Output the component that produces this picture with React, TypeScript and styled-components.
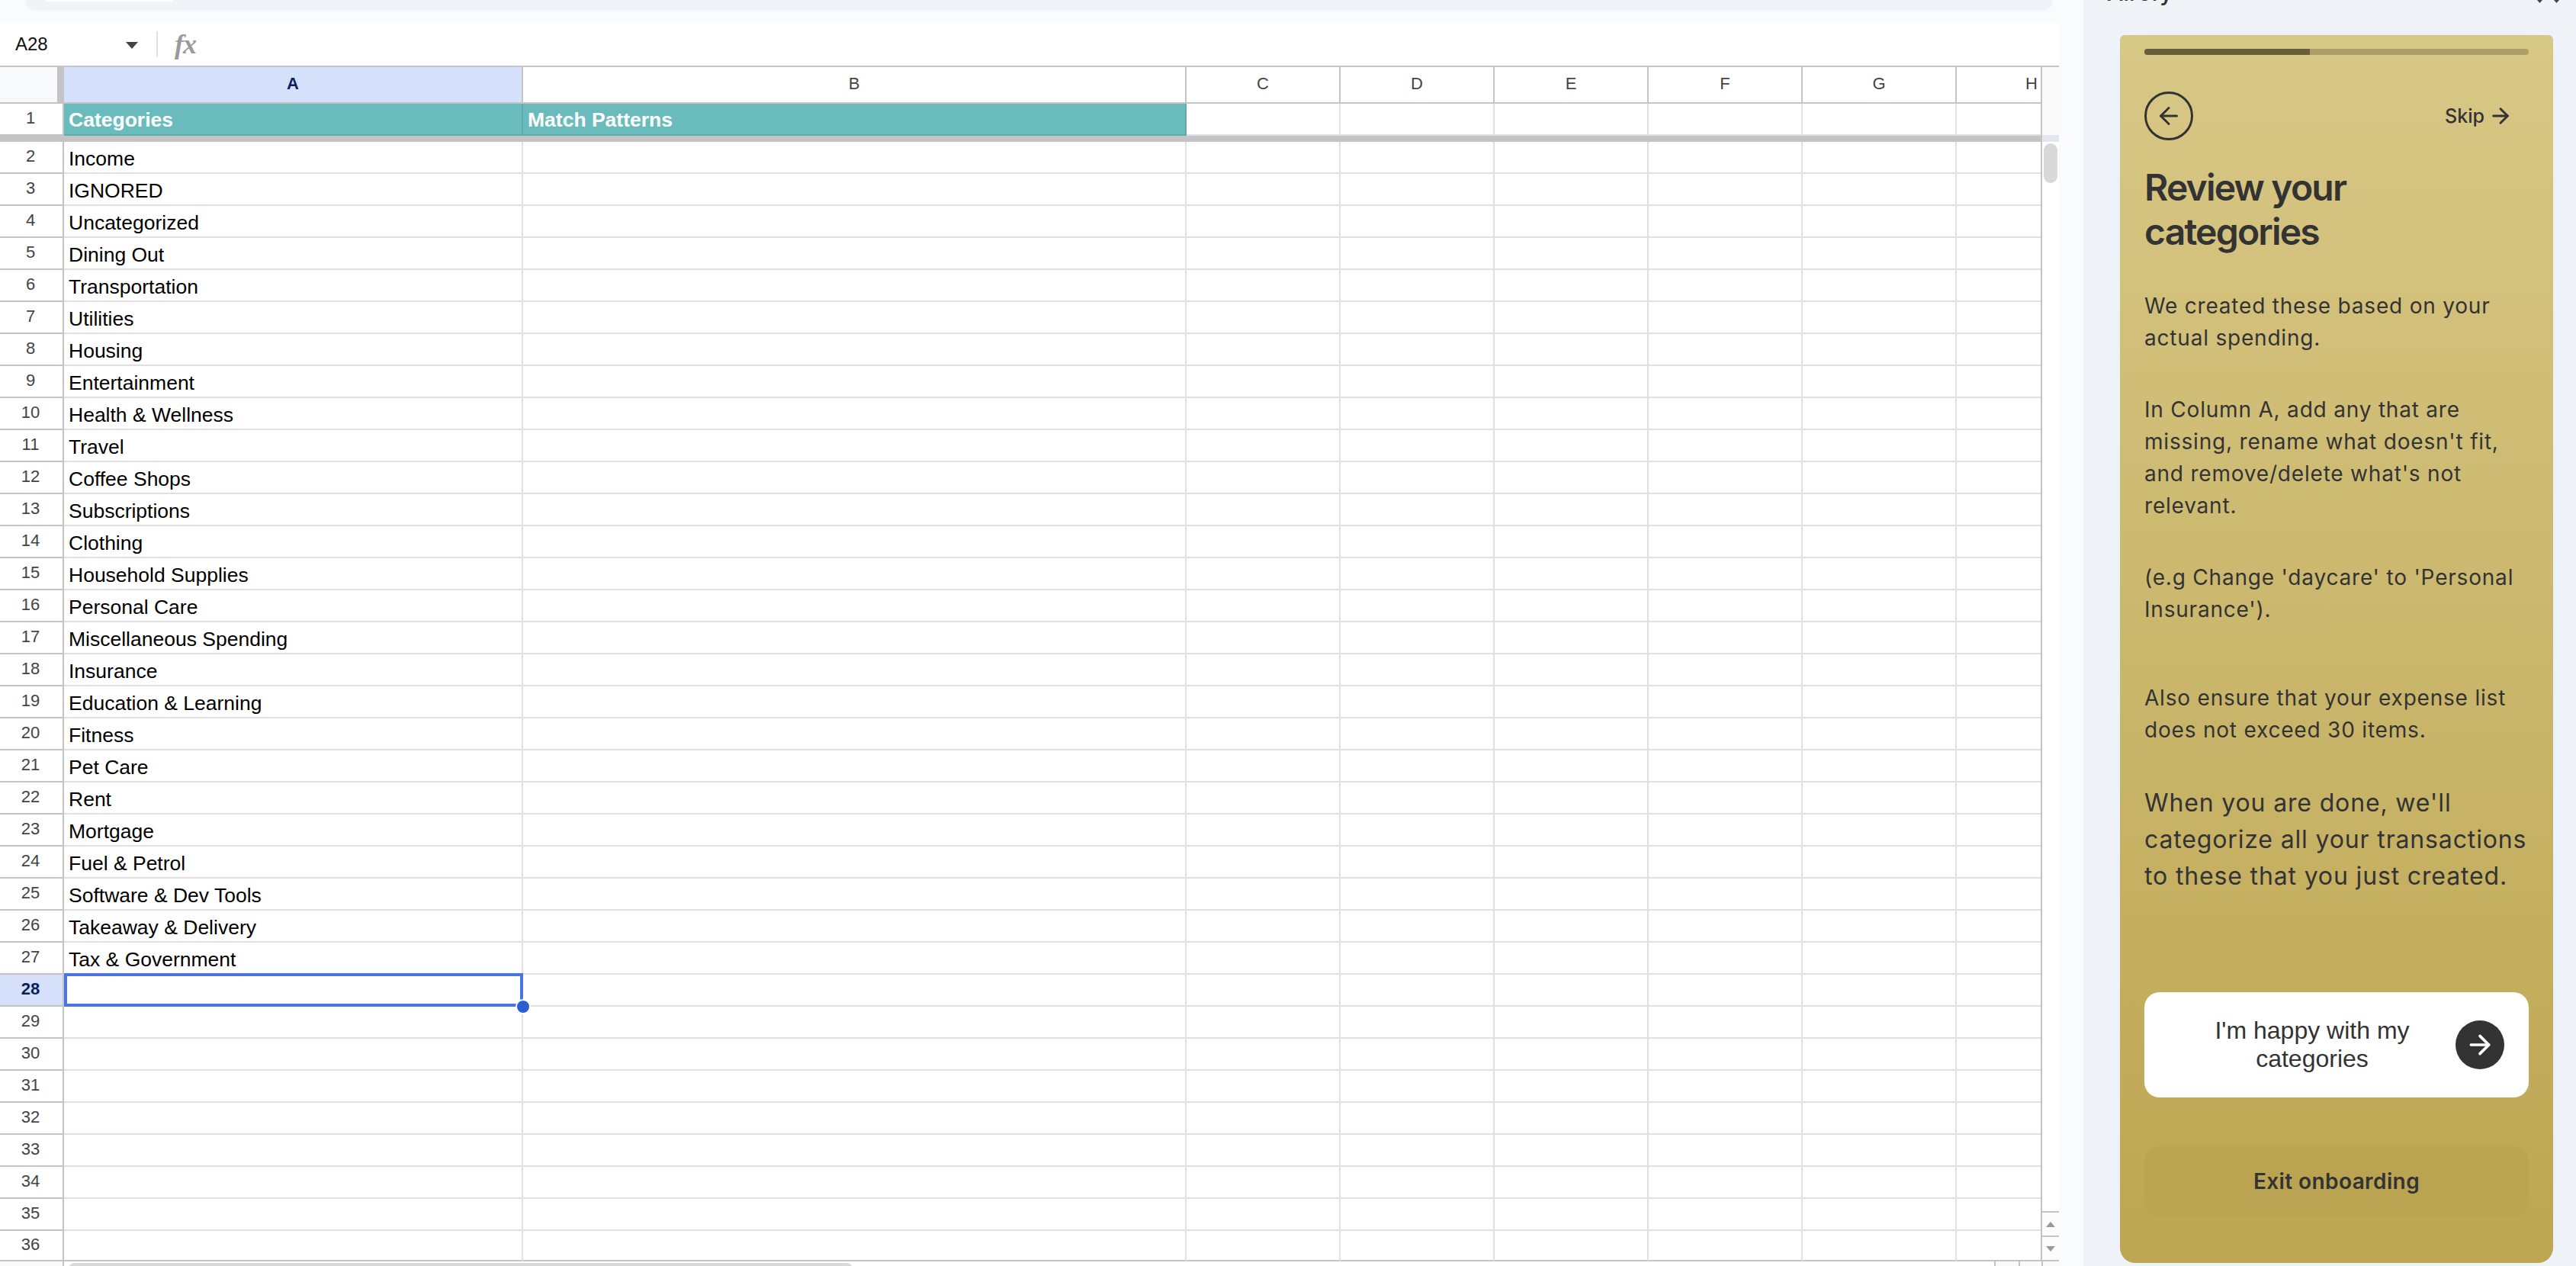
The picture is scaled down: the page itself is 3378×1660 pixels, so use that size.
import React from "react";
import styled, { createGlobalStyle } from "styled-components";
import { ArrowLeft, ArrowRight } from "lucide-react";

const Global = createGlobalStyle`
  html, body { margin: 0; padding: 0; background: #f9fbfd; }
  * { box-sizing: border-box; }
`;

const Page = styled.div`
  width: 3378px;
  height: 1660px;
  display: flex;
  overflow: hidden;
  font-family: "Liberation Sans", Arial, sans-serif;
  background: #f9fbfd;
`;
const Main = styled.div`
  width: 2732px;
  height: 1660px;
  display: flex;
  flex-direction: column;
`;
const TopStrip = styled.div`
  height: 30px;
  padding-left: 33px;
  width: 2692px;
`;
const TopBar = styled.div`
  height: 14px;
  background: #f0f4f9;
  border-radius: 0 0 20px 20px;
  padding-left: 27px;
`;
const TopPill = styled.div`
  width: 166px;
  height: 2px;
  background: #fff;
  border-radius: 0 0 6px 6px;
`;
const Sheet = styled.div`
  width: 2700px;
  height: 1630px;
  background: #fff;
  display: flex;
  flex-direction: column;
`;
const FormulaBar = styled.div`
  height: 56px;
  display: flex;
  align-items: center;
  padding-left: 20px;
`;
const NameBox = styled.div`
  width: 145px;
  font-size: 24px;
  color: #111;
  margin-top: -1px;
`;
const Caret = styled.div`
  width: 0;
  height: 0;
  border-left: 8px solid transparent;
  border-right: 8px solid transparent;
  border-top: 9px solid #444;
  margin-top: 2px;
`;
const Divider = styled.div`
  width: 2px;
  height: 34px;
  background: #dde2e8;
  margin-left: 24px;
`;
const Fx = styled.div`
  font-family: "Liberation Serif", serif;
  font-style: italic;
  font-weight: 700;
  font-size: 36px;
  line-height: 36px;
  color: #9a9a9a;
  margin-left: 22px;
  letter-spacing: -1px;
`;
const GridArea = styled.div`
  display: flex;
  border-top: 2px solid #c4c4c4;
  height: 1568px;
`;
const Grid = styled.div`
  width: 2678px;
  border-right: 2px solid #c4c4c4;
  display: flex;
  flex-direction: column;
  position: relative;
`;
const Row = styled.div<{ $h: number }>`
  display: grid;
  grid-template-columns: 84px 602px 870px repeat(5, 202px) 110px;
  height: ${(p) => p.$h}px;
  flex: none;
`;
const Corner = styled.div`
  background: #f8f9fa;
  border-bottom: 2px solid #c4c4c4;
  border-right: 9px solid #c4c4c4;
`;
const ColHead = styled.div<{ $sel?: boolean; $end?: boolean }>`
  display: flex;
  align-items: center;
  justify-content: ${(p) => (p.$end ? "flex-end" : "center")};
  padding-right: ${(p) => (p.$end ? "4px" : "0")};
  padding-bottom: 2px;
  font-size: 22px;
  font-weight: ${(p) => (p.$sel ? 700 : 400)};
  color: ${(p) => (p.$sel ? "#0b1f5c" : "#444")};
  background: ${(p) => (p.$sel ? "#d5e1fb" : "#fff")};
  border-bottom: 2px solid #c4c4c4;
  border-right: ${(p) => (p.$end ? "0" : "2px solid #c4c4c4")};
`;
const RowHead = styled.div<{ $sel?: boolean }>`
  display: flex;
  align-items: center;
  justify-content: center;
  padding-bottom: 3px;
  padding-right: 2px;
  font-size: 22px;
  font-weight: ${(p) => (p.$sel ? 700 : 400)};
  color: ${(p) => (p.$sel ? "#0b1f5c" : "#444")};
  background: ${(p) => (p.$sel ? "#d5e1fb" : "#fff")};
  border-bottom: 2px solid #c4c4c4;
  border-right: 2px solid #c4c4c4;
`;
const Cell = styled.div<{ $head?: boolean; $last?: boolean; $end?: boolean }>`
  display: flex;
  align-items: center;
  padding-left: 6px;
  padding-top: ${(p) => (p.$head ? "2px" : "4px")};
  font-size: 26.5px;
  white-space: nowrap;
  overflow: hidden;
  font-weight: ${(p) => (p.$head ? 700 : 400)};
  color: ${(p) => (p.$head ? "#fff" : "#000")};
  background: ${(p) => (p.$head ? "#6abcbc" : "#fff")};
  border-bottom: 2px solid ${(p) => (p.$head ? "#5faaaa" : p.$last ? "#c4c4c4" : "#e0e0e0")};
  border-right: ${(p) => (p.$end ? "0" : `2px solid ${p.$head ? "#5faaaa" : "#e0e0e0"}`)};
`;
const FreezeBar = styled.div`
  height: 8px;
  flex: none;
  background: #c4c4c4;
`;
const Selection = styled.div`
  position: absolute;
  left: 84px;
  top: 1188px;
  width: 602px;
  height: 44px;
  border: 4px solid #4a74e0;
`;
const Handle = styled.div`
  position: absolute;
  right: -14px;
  bottom: -14px;
  width: 20px;
  height: 20px;
  border-radius: 50%;
  background: #2b5ed0;
  border: 2px solid #fff;
`;
const Gutter = styled.div`
  width: 22px;
  display: flex;
  flex-direction: column;
`;
const GutterHead = styled.div`
  height: 89px;
  background: #fafafa;
`;
const GutterFreeze = styled.div`
  height: 9px;
  background: #e1e6ef;
`;
const Track = styled.div`
  flex: 1;
  padding: 2px 2px 0;
  background: #fff;
`;
const Thumb = styled.div`
  width: 18px;
  height: 52px;
  border-radius: 9px;
  background: #d9d9d9;
`;
const ArrowBtn = styled.div`
  height: 32px;
  border-top: 2px solid #c4c4c4;
  background: #fcfcfc;
  display: flex;
  align-items: center;
  justify-content: center;
`;
const ArrowUp = styled.div`
  width: 0;
  height: 0;
  border-left: 6px solid transparent;
  border-right: 6px solid transparent;
  border-bottom: 7px solid #999;
`;
const ArrowDown = styled.div`
  width: 0;
  height: 0;
  border-left: 6px solid transparent;
  border-right: 6px solid transparent;
  border-top: 7px solid #999;
`;
const GutterEnd = styled.div`
  height: 2px;
  background: #c4c4c4;
`;
const BottomBar = styled.div`
  height: 6px;
  display: flex;
  background: #fff;
`;
const BottomCorner = styled.div`
  width: 84px;
  background: #fafafa;
  border-right: 2px solid #c4c4c4;
`;
const HScroll = styled.div`
  width: 2531px;
  padding: 2px 0 0 6px;
`;
const HThumb = styled.div`
  width: 1028px;
  height: 8px;
  border-radius: 8px 8px 0 0;
  background: #d9d9d9;
`;
const ScrollBtn = styled.div<{ $w: number }>`
  width: ${(p) => p.$w}px;
  background: #fafafa;
  border-left: 2px solid #c4c4c4;
`;

const Side = styled.div`
  width: 646px;
  height: 1660px;
  background: #f0f4f9;
  display: flex;
  flex-direction: column;
`;
const SideHead = styled.div`
  height: 10px;
  margin-bottom: 36px;
  padding: 0 21px 0 31px;
  display: flex;
  align-items: flex-end;
  justify-content: space-between;
`;
const SideTitle = styled.div`
  font-family: "Inter", sans-serif;
  font-size: 30px;
  line-height: 40px;
  font-weight: 500;
  color: #333;
  white-space: nowrap;
`;
const SideChevrons = styled.svg`
  width: 30px;
  height: 8px;
  align-self: flex-start;
`;
const Panel = styled.div`
  width: 568px;
  height: 1610px;
  margin-left: 48px;
  padding: 18px 32px 0;
  border-radius: 6px 6px 20px 20px;
  background: linear-gradient(180deg, #d8c886 0%, #bda652 100%);
  box-shadow: 0 0 40px rgba(90, 130, 255, 0.04);
  color: #333;
  font-family: "Inter", sans-serif;
  display: flex;
  flex-direction: column;
`;
const Progress = styled.div`
  height: 8px;
  border-radius: 4px;
  background: #ad9e69;
  overflow: hidden;
  flex: none;
`;
const ProgressFill = styled.div`
  height: 100%;
  background: #685d3d;
`;
const NavRow = styled.div`
  margin-top: 48px;
  display: flex;
  justify-content: space-between;
  align-items: center;
  padding-right: 21px;
`;
const BackButton = styled.div`
  width: 64px;
  height: 64px;
  border-radius: 50%;
  border: 3px solid #333;
  display: flex;
  align-items: center;
  justify-content: center;
`;
const Skip = styled.div`
  display: flex;
  align-items: center;
  gap: 5px;
  font-size: 25px;
  font-weight: 500;
`;
const Heading = styled.h1`
  margin: 33px 0 0;
  font-size: 48px;
  line-height: 58px;
  font-weight: 600;
  letter-spacing: -1.8px;
`;
const Body = styled.p<{ $gap: number; $large?: boolean }>`
  margin: ${(p) => p.$gap}px 0 0;
  font-size: ${(p) => (p.$large ? 32 : 28)}px;
  line-height: ${(p) => (p.$large ? 48 : 42)}px;
  font-weight: 400;
  letter-spacing: ${(p) => (p.$large ? 0.85 : 0.8)}px;
`;
const HappyButton = styled.div`
  margin-top: 128px;
  height: 138px;
  flex: none;
  background: #fff;
  border-radius: 20px;
  display: flex;
  align-items: center;
  padding: 0 32px;
`;
const HappyText = styled.div`
  flex: 1;
  font-family: "Liberation Sans", Arial, sans-serif;
  font-size: 32px;
  line-height: 37px;
  text-align: center;
  color: #333;
  padding: 0 20px;
`;
const HappyIcon = styled.div`
  width: 64px;
  height: 64px;
  border-radius: 50%;
  background: #333;
  display: flex;
  align-items: center;
  justify-content: center;
  flex: none;
`;
const ExitButton = styled.div`
  margin-top: 64px;
  height: 92px;
  flex: none;
  border-radius: 20px;
  background: #bba451;
  display: flex;
  align-items: center;
  justify-content: center;
  font-size: 28px;
  font-weight: 600;
  letter-spacing: 0.4px;
`;

const cols = ["A", "B", "C", "D", "E", "F", "G", "H"];
const cats = [
  "Income", "IGNORED", "Uncategorized", "Dining Out", "Transportation", "Utilities", "Housing",
  "Entertainment", "Health & Wellness", "Travel", "Coffee Shops", "Subscriptions", "Clothing",
  "Household Supplies", "Personal Care", "Miscellaneous Spending", "Insurance", "Education & Learning",
  "Fitness", "Pet Care", "Rent", "Mortgage", "Fuel & Petrol", "Software & Dev Tools",
  "Takeaway & Delivery", "Tax & Government",
];
const rows = Array.from({ length: 35 }, (_, i) => i + 2);

export default function App() {
  return (
    <Page>
      <Global />
      <Main>
        <TopStrip>
          <TopBar>
            <TopPill />
          </TopBar>
        </TopStrip>
        <Sheet>
          <FormulaBar>
            <NameBox>A28</NameBox>
            <Caret />
            <Divider />
            <Fx>fx</Fx>
          </FormulaBar>
          <GridArea>
            <Grid>
              <Row $h={48}>
                <Corner />
                {cols.map((c, i) => (
                  <ColHead key={c} $sel={i === 0} $end={c === "H"}>
                    {c}
                  </ColHead>
                ))}
              </Row>
              <Row $h={42}>
                <RowHead>1</RowHead>
                <Cell $head>Categories</Cell>
                <Cell $head>Match Patterns</Cell>
                {cols.slice(2).map((c) => (
                  <Cell key={c} $end={c === "H"} />
                ))}
              </Row>
              <FreezeBar />
              {rows.map((n) => {
                const last = n === 36;
                return (
                  <Row key={n} $h={last ? 40 : 42}>
                    <RowHead $sel={n === 28}>{n}</RowHead>
                    <Cell $last={last}>{cats[n - 2] ?? ""}</Cell>
                    {cols.slice(1).map((c) => (
                      <Cell key={c} $last={last} $end={c === "H"} />
                    ))}
                  </Row>
                );
              })}
              <Selection>
                <Handle />
              </Selection>
            </Grid>
            <Gutter>
              <GutterHead />
              <GutterFreeze />
              <Track>
                <Thumb />
              </Track>
              <ArrowBtn>
                <ArrowUp />
              </ArrowBtn>
              <ArrowBtn>
                <ArrowDown />
              </ArrowBtn>
              <GutterEnd />
            </Gutter>
          </GridArea>
          <BottomBar>
            <BottomCorner />
            <HScroll>
              <HThumb />
            </HScroll>
            <ScrollBtn $w={32} />
            <ScrollBtn $w={30} />
            <ScrollBtn $w={23} />
          </BottomBar>
        </Sheet>
      </Main>
      <Side>
        <SideHead>
          <SideTitle>Airefy</SideTitle>
          <SideChevrons viewBox="0 0 30 8">
            <path d="M0 0h7l-3.5 4zM22 0h7l-3.5 4z" fill="#444" />
          </SideChevrons>
        </SideHead>
        <Panel>
          <Progress>
            <ProgressFill style={{ width: "43%" }} />
          </Progress>
          <NavRow>
            <BackButton>
              <ArrowLeft size={36} strokeWidth={2} color="#333" />
            </BackButton>
            <Skip>
              Skip
              <ArrowRight size={32} strokeWidth={2.2} color="#333" />
            </Skip>
          </NavRow>
          <Heading>
            Review your
            <br />
            categories
          </Heading>
          <Body $gap={47}>We created these based on your actual spending.</Body>
          <Body $gap={52}>In Column A, add any that are missing, rename what doesn't fit, and remove/delete what's not relevant.</Body>
          <Body $gap={52}>(e.g Change 'daycare' to 'Personal Insurance').</Body>
          <Body $gap={74}>Also ensure that your expense list does not exceed 30 items.</Body>
          <Body $gap={51} $large>When you are done, we'll categorize all your transactions to these that you just created.</Body>
          <HappyButton>
            <HappyText>I'm happy with my categories</HappyText>
            <HappyIcon>
              <ArrowRight size={40} strokeWidth={2.2} color="#fff" />
            </HappyIcon>
          </HappyButton>
          <ExitButton>Exit onboarding</ExitButton>
        </Panel>
      </Side>
    </Page>
  );
}
